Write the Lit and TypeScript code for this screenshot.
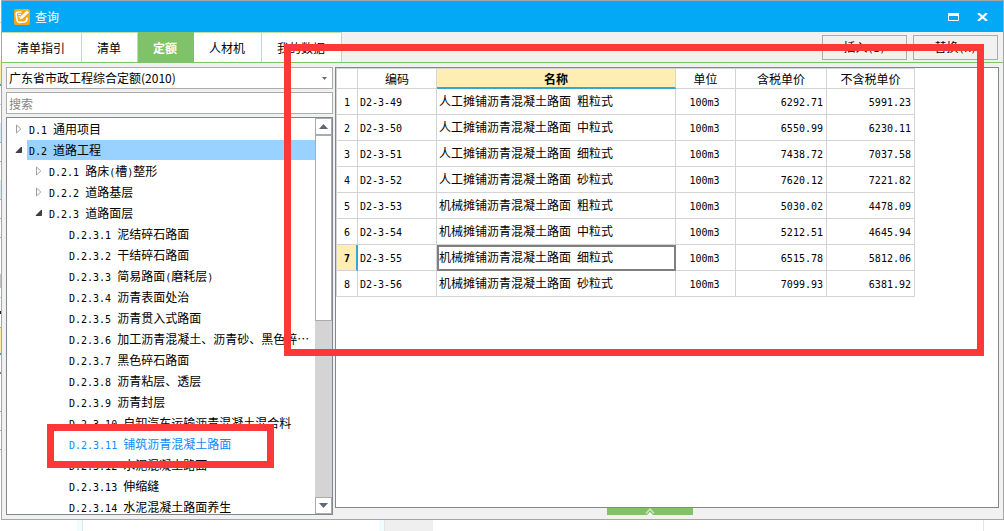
import { LitElement, html, css, svg, nothing } from "lit";
import { customElement, property, state } from "lit/decorators.js";

interface TreeItem { code: string; name: string; level: number; open?: boolean; }
interface QuotaRow { code: string; name: string; unit: string; taxed: string; untaxed: string; }

const TABS = ["清单指引", "清单", "定额", "人材机", "我的数据"];

const TREE: TreeItem[] = [
  { code: "D.1", name: "通用项目", level: 0, open: false },
  { code: "D.2", name: "道路工程", level: 0, open: true },
  { code: "D.2.1", name: "路床(槽)整形", level: 1, open: false },
  { code: "D.2.2", name: "道路基层", level: 1, open: false },
  { code: "D.2.3", name: "道路面层", level: 1, open: true },
  { code: "D.2.3.1", name: "泥结碎石路面", level: 2 },
  { code: "D.2.3.2", name: "干结碎石路面", level: 2 },
  { code: "D.2.3.3", name: "简易路面(磨耗层)", level: 2 },
  { code: "D.2.3.4", name: "沥青表面处治", level: 2 },
  { code: "D.2.3.5", name: "沥青贯入式路面", level: 2 },
  { code: "D.2.3.6", name: "加工沥青混凝土、沥青砂、黑色碎…", level: 2 },
  { code: "D.2.3.7", name: "黑色碎石路面", level: 2 },
  { code: "D.2.3.8", name: "沥青粘层、透层", level: 2 },
  { code: "D.2.3.9", name: "沥青封层", level: 2 },
  { code: "D.2.3.10", name: "自卸汽车运输沥青混凝土混合料", level: 2 },
  { code: "D.2.3.11", name: "铺筑沥青混凝土路面", level: 2 },
  { code: "D.2.3.12", name: "水泥混凝土路面", level: 2 },
  { code: "D.2.3.13", name: "伸缩缝", level: 2 },
  { code: "D.2.3.14", name: "水泥混凝土路面养生", level: 2 },
];

const ROWS: QuotaRow[] = [
  { code: "D2-3-49", name: "人工摊铺沥青混凝土路面 粗粒式", unit: "100m3", taxed: "6292.71", untaxed: "5991.23" },
  { code: "D2-3-50", name: "人工摊铺沥青混凝土路面 中粒式", unit: "100m3", taxed: "6550.99", untaxed: "6230.11" },
  { code: "D2-3-51", name: "人工摊铺沥青混凝土路面 细粒式", unit: "100m3", taxed: "7438.72", untaxed: "7037.58" },
  { code: "D2-3-52", name: "人工摊铺沥青混凝土路面 砂粒式", unit: "100m3", taxed: "7620.12", untaxed: "7221.82" },
  { code: "D2-3-53", name: "机械摊铺沥青混凝土路面 粗粒式", unit: "100m3", taxed: "5030.02", untaxed: "4478.09" },
  { code: "D2-3-54", name: "机械摊铺沥青混凝土路面 中粒式", unit: "100m3", taxed: "5212.51", untaxed: "4645.94" },
  { code: "D2-3-55", name: "机械摊铺沥青混凝土路面 细粒式", unit: "100m3", taxed: "6515.78", untaxed: "5812.06" },
  { code: "D2-3-56", name: "机械摊铺沥青混凝土路面 砂粒式", unit: "100m3", taxed: "7099.93", untaxed: "6381.92" },
];

/* Half-width characters are set in a monospaced face, half as wide as a Chinese character. */
const mixed = (text: string) =>
  text
    .split(/([\x20-\x7e]+)/)
    .filter(Boolean)
    .map((part) => (/^[\x20-\x7e]/.test(part) ? html`<span class="half">${part}</span>` : part));

const textStyles = css`
  * { box-sizing: border-box; }
  .half { font-family: "DejaVu Sans Mono", monospace; font-size: 10px; white-space: pre; }
  button, input, select { font: inherit; color: inherit; margin: 0; border-radius: 0; }
`;

@customElement("quota-tree")
export class QuotaTree extends LitElement {
  static styles = [textStyles, css`
    :host { display: flex; min-height: 0; border: 1px solid #828790; background: #fff; }
    .list { flex: 1; min-width: 0; overflow: hidden; margin: 0; padding: 0; list-style: none; }
    .row { display: flex; height: 21px; padding-top: 1px; line-height: 19px; white-space: nowrap; padding-left: 8px; }
    .level1 { padding-left: 28px; }
    .level2 { padding-left: 48px; }
    .toggle { width: 12px; flex: none; padding: 0; border: 0; background: none; display: flex; align-items: center; }
    .label { flex: 1; min-width: 0; padding-left: 2px; }
    .selected { background: #99d1ff; }
    .current { color: #0a8cff; }
    .scroll { width: 17px; flex: none; display: flex; flex-direction: column; background: #d4d4d4; }
    .step { height: 17px; flex: none; padding: 0; border: 1px solid #ababab; background: #fff; display: grid; place-items: center; }
    .thumb { flex: 0 0 47%; border: 1px solid #ababab; background: #fff; }
    .track { flex: 1; }
  `];

  @property({ attribute: false }) items: TreeItem[] = [];
  @property() selected = "";
  @property() current = "";

  private arrow(open: boolean) {
    return svg`<svg width="8" height="10" viewBox="0 0 8 10">${open
      ? svg`<path d="M6.500 2v5.500H1z" fill="#404040" stroke="#262626" stroke-width=".8"/>`
      : svg`<path d="M1.500 1v8L5.800 5z" fill="#fff" stroke="#a0a0a0"/>`}</svg>`;
  }

  render() {
    return html`
      <ul class="list" role="tree" aria-label="定额">
        ${this.items.map((i) => html`
          <li class="row level${i.level}" role="treeitem" aria-level=${i.level + 1}>
            ${i.open === undefined
              ? html`<span class="toggle"></span>`
              : html`<button class="toggle" aria-label=${i.name}>${this.arrow(i.open)}</button>`}
            <span class="label ${i.code === this.selected ? "selected" : ""} ${i.code === this.current ? "current" : ""}"
              >${mixed(`${i.code} ${i.name}`)}</span>
          </li>`)}
      </ul>
      <div class="scroll">
        <button class="step" aria-label="向上"><svg width="9" height="5"><path d="M0 5 4.500 0 9 5z" fill="#606878"/></svg></button>
        <div class="thumb"></div>
        <div class="track"></div>
        <button class="step" aria-label="向下"><svg width="9" height="5"><path d="M0 0h9L4.500 5z" fill="#606878"/></svg></button>
      </div>`;
  }
}

@customElement("quota-table")
export class QuotaTable extends LitElement {
  static styles = [textStyles, css`
    :host { display: block; min-height: 0; overflow: hidden; border: 1px solid #828790; background: #fff; }
    table { border-collapse: separate; border-spacing: 0; table-layout: fixed; width: 579px;
      border-top: 1px solid #d3d3d3; border-left: 1px solid #d3d3d3; }
    th, td { padding: 1px 2px 0; height: 26px; font-weight: normal; text-align: left; white-space: nowrap;
      border-right: 1px solid #d3d3d3; border-bottom: 1px solid #d3d3d3; }
    thead th { height: 20px; text-align: center; }
    .index { text-align: center; }
    .unit { text-align: center; padding-right: 4px; }
    .price { text-align: right; }
    .c-index { width: 21px; }
    .c-code { width: 79px; }
    .c-name { width: 239px; }
    .c-unit { width: 60px; }
    .c-taxed { width: 91px; }
    .price { padding-right: 3px; }
    thead .marked { background: #ffeeb4; font-weight: bold; border-bottom: 2px solid #37a5d5; }
    .index.marked { background: #ffeeb4; font-weight: bold; border-right: 2px solid #37a5d5; padding-right: 1px; }
    .focused { outline: 2px solid #7f7f7f; outline-offset: -2px; }
  `];

  @property({ attribute: false }) rows: QuotaRow[] = [];
  @state() private active = 6;

  render() {
    return html`
      <table>
        <colgroup>
          <col class="c-index"><col class="c-code"><col class="c-name"><col class="c-unit"><col class="c-taxed"><col>
        </colgroup>
        <thead>
          <tr><th></th><th scope="col">编码</th><th scope="col" class="marked">名称</th><th scope="col">单位</th><th scope="col">含税单价</th><th scope="col">不含税单价</th></tr>
        </thead>
        <tbody>
          ${this.rows.map((r, n) => {
            const on = n === this.active;
            return html`<tr @click=${() => (this.active = n)}>
              <th scope="row" class="index ${on ? "marked" : ""}">${mixed(String(n + 1))}</th>
              <td>${mixed(r.code)}</td>
              <td class=${on ? "focused" : nothing}>${mixed(r.name)}</td>
              <td class="unit">${mixed(r.unit)}</td>
              <td class="price">${mixed(r.taxed)}</td>
              <td class="price">${mixed(r.untaxed)}</td>
            </tr>`;
          })}
        </tbody>
      </table>`;
  }
}

@customElement("app-root")
export class AppRoot extends LitElement {
  static styles = [textStyles, css`
    :host { display: flex; flex-direction: column; position: relative; height: 100vh; overflow: hidden;
      color: #000; font: 12px/16px "Noto Sans CJK SC", sans-serif;
      background: #fff linear-gradient(#fff 22px, #ccc 22px 23px, #fff 23px 60px, #ffe9a8 60px 84px, #37a5d5 84px 86px,
        #fff 86px 104px, #ccc 104px 105px, #fff 105px 123px, #d3ecfa 123px 142px, #aaa 142px 143px, #fff 143px 161px,
        #aaa 161px 162px, #fff 162px 180px, #d3ecfa 180px 199px, #aaa 199px 200px, #fff 200px 218px, #aaa 218px 219px,
        #fff 219px 237px, #aaa 237px 238px, #fff 238px 274px, #c4c4c4 274px 288px, #fff 288px 297px, #b9e2a6 297px 298px,
        #fff 298px 311px, #222 311px 314px, #fff 314px 327px, #80c269 327px 328px, #ffe9a8 328px 353px, #37a5d5 353px 355px,
        #fff 355px 372px, #7f7f7f 372px 374px, #fff 374px 411px, #aaa 411px 412px, #fff 412px 430px, #aaa 430px 431px,
        #fff 431px 449px, #aaa 449px 450px, #fff 450px) left top / 1px 100% no-repeat; }
    .window { flex: 1; min-height: 0; margin-left: 1px; display: flex; flex-direction: column;
      background: #f1f1f1; border: 1px solid #a6a6a6; }
    .title { display: flex; align-items: center; height: 31px; padding: 0 14px 0 12px; background: #03a9f4; color: #fff; }
    .title h1 { flex: 1; margin: 0 0 0 5px; font-size: 12px; font-weight: normal; }
    .title button { display: grid; place-items: center; width: 14px; height: 16px; padding: 0; border: 0; background: none; margin-left: 15px; }
    .bar { display: flex; height: 31px; border-bottom: 1px solid #7fc36b; }
    .tab { padding: 1px 16px 0 15px; border: 0; border-top: 1px solid #b9e2a6; border-right: 1px solid #b9e2a6; background: #fff; }
    .tab.active { background: #80c269; border-color: #80c269; color: #fff; font-weight: bold; }
    .actions { margin-left: auto; display: flex; gap: 6px; padding: 3px 5px 2px 0; }
    .action { width: 85px; border: 1px solid #ababab; background: #f1f1f1; padding: 0; }
    .body { flex: 1; min-height: 0; display: grid; grid-template-columns: 327px 1fr; gap: 2px; padding: 4px; }
    .side, .main { display: flex; flex-direction: column; min-width: 0; min-height: 0; }
    .side { gap: 3px; }
    .combo { position: relative; display: flex; height: 22px; flex: none; }
    .combo svg { position: absolute; right: 6px; top: 10px; pointer-events: none; }
    select { appearance: none; flex: 1; padding: 0 2px; border: 1px solid #ababab; background: #fff; }
    .search { height: 22px; flex: none; padding: 0 2px; border: 1px solid #ababab; background: #fff; }
    .search::placeholder { color: #858585; opacity: 1; }
    quota-tree, quota-table { flex: 1; }
    .footer { display: flex; justify-content: center; height: 7px; flex: none; padding-right: 34px; }
    .handle { width: 86px; padding: 0; border: 0; background: #80c269; display: grid; place-items: center; }
    .behind { display: flex; height: 11px; flex: none; }
    .cell { width: 302px; border-right: 1px solid #e4e4e4; background: linear-gradient(to left, #f0fdff 5px, #fff 5px); }
    .cell.first { width: 83px; }
    .cell.last { flex: 1; margin-right: 20px; background: linear-gradient(to right, #efefef 48px, #fff 48px); }
    .mark { position: absolute; border: 7px solid #fd3838; pointer-events: none; }
    .mark.table { left: 284px; top: 44px; width: 700px; height: 312px; }
    .mark.item { left: 47px; top: 424px; width: 227px; height: 44px; }
  `];

  @state() private tab = "定额";

  render() {
    return html`
      <section class="window">
        <header class="title">
          <svg width="16" height="16" viewBox="0 0 16 16">
            <rect width="16" height="16" rx="2" fill="#f9a51a"/>
            <path d="M7.500 3H4.500Q2 3 2.200 5.500L3 11q.4 2.500 3 2.300l4-.3q2.500-.3 2.800-2.500l.2-2" fill="none" stroke="#fff" stroke-width="1.700"/>
            <path d="M5.500 10.500 6.500 7.500 13 1.500l2 2-6.500 6z" fill="#fff"/>
            <path d="M4 5.500h3M4.500 7.800h1.500" stroke="#fff" stroke-width="1.200"/>
          </svg>
          <h1>查询</h1>
          <button aria-label="最大化"><svg width="11" height="8"><path d="M.5.5h10v7H.5z" fill="none" stroke="#fff"/><path d="M0 0h11v3H0z" fill="#fff"/></svg></button>
          <button aria-label="关闭"><svg width="11" height="8" viewBox="0 0 11 8"><path d="M1 0 10 8M10 0 1 8" stroke="#fff" stroke-width="2.200"/></svg></button>
        </header>
        <nav class="bar">
          ${TABS.map((t) => html`<button class="tab ${t === this.tab ? "active" : ""}" @click=${() => (this.tab = t)}>${t}</button>`)}
          <div class="actions">
            <button class="action">插入${mixed("(I)")}</button>
            <button class="action">替换${mixed("(R)")}</button>
          </div>
        </nav>
        <div class="body">
          <div class="side">
            <div class="combo">
              <select aria-label="定额库"><option>广东省市政工程综合定额(2010)</option></select>
              <svg width="5" height="3"><path d="M0 0h5L2.500 3z" fill="#6b6b6b"/></svg>
            </div>
            <input class="search" type="text" placeholder="搜索" aria-label="搜索">
            <quota-tree .items=${TREE} selected="D.2" current="D.2.3.11"></quota-tree>
          </div>
          <div class="main">
            <quota-table .rows=${ROWS}></quota-table>
            <div class="footer">
              <button class="handle" aria-label="展开"><svg width="10" height="7" viewBox="0 0 10 7"><path d="M1 5.500 5 1l4 4.500" fill="none" stroke="#c9e8bd" stroke-width="1.500"/><path d="M2 7l3-3 3 3z" fill="#fff"/></svg></button>
            </div>
          </div>
        </div>
      </section>
      <div class="behind"><div class="cell first"></div><div class="cell"></div><div class="cell last"></div></div>
      <div class="mark table"></div>
      <div class="mark item"></div>`;
  }
}
